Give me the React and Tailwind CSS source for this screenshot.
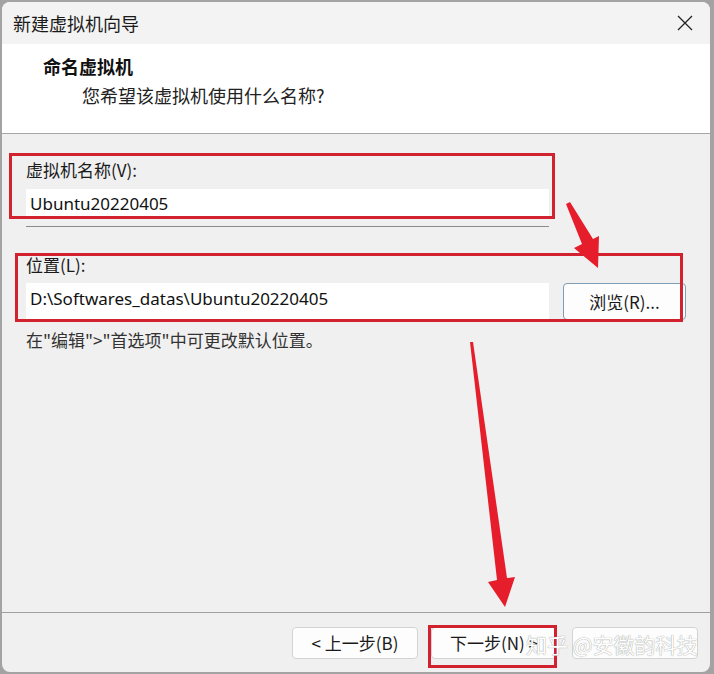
import React from "react"

const cjk = { fontFamily: '"Noto Sans CJK SC", "Noto Sans", sans-serif' }
const latin = { fontFamily: '"Noto Sans", "Noto Sans CJK SC", sans-serif' }

// red annotation arrows, drawn in window coordinates
const Arrows = () => (
  <svg className="absolute inset-0 pointer-events-none" width="708" height="670" viewBox="0 0 708 670">
    <polygon
      points="564,202 568,200 591,237 597,234 596,266 572,246 580,242"
      fill="#e61e2b"
    />
    <polygon
      points="468,340 471,340 505,576 513,575 503,605 486,580 495,578"
      fill="#e61e2b"
    />
  </svg>
)

const FooterButton = ({ children, className = "" }) => (
  <button
    className={`w-[126px] h-[32px] rounded-[4px] border border-[#d3d3d3] bg-[#fdfdfd] text-[17px] text-[#1a1a1a] flex items-center justify-center ${className}`}
    style={cjk}
  >
    {children}
  </button>
)

export default function App() {
  return (
    <div className="w-[714px] h-[674px] bg-[#a3a3a3] pt-[2px] pl-[2px]">
      <div className="relative w-[708px] h-[670px] rounded-[8px] overflow-hidden flex flex-col bg-[#f0f0f0]">
        {/* title bar */}
        <div className="h-[42px] bg-[#f3f3f3] flex items-center justify-between pl-[11px] pr-[12px]">
          <span className="text-[18px] text-[#1a1a1a] leading-none" style={cjk}>
            新建虚拟机向导
          </span>
          <svg width="18" height="18" viewBox="0 0 18 18" className="mr-[4px]">
            <path d="M2 2 L16 16 M16 2 L2 16" stroke="#222" strokeWidth="1.3" fill="none" />
          </svg>
        </div>

        {/* header */}
        <div className="h-[90px] bg-white border-b border-[#a6a6a6] pl-[41px] pt-[10px]">
          <div className="text-[18px] font-bold leading-[24px] text-[#111]" style={cjk}>
            命名虚拟机
          </div>
          <div className="ml-[39px] mt-[5px] text-[18px] leading-[24px] text-[#222]" style={cjk}>
            您希望该虚拟机使用什么名称?
          </div>
        </div>

        {/* body */}
        <div className="flex-1 px-[24px] pt-[24px]">
          <div className="text-[17px] leading-[24px] text-[#1a1a1a]" style={cjk}>
            虚拟机名称(V):
          </div>
          <div
            className="mt-[7px] w-[523px] h-[29px] bg-white flex items-center pl-[4px] text-[17px] text-[#111]"
            style={latin}
          >
            Ubuntu20220405
          </div>
          <div className="mt-[8px] w-[523px] h-px bg-[#8c8c8c]" />

          <div className="mt-[26px] text-[17px] leading-[24px] text-[#1a1a1a]" style={cjk}>
            位置(L):
          </div>
          <div className="mt-[6px] flex items-center">
            <div
              className="w-[523px] h-[37px] bg-white border-b border-[#8a8a8a] flex items-center pl-[4px] pb-[4px] text-[17px] text-[#111]"
              style={latin}
            >
              D:\Softwares_datas\Ubuntu20220405
            </div>
            <button
              className="ml-[14px] w-[123px] h-[37px] rounded-[4px] border border-[#7f9db3] bg-[#fdfdfd] text-[17px] text-[#1a1a1a] flex items-center justify-center"
              style={cjk}
            >
              浏览(R)...
            </button>
          </div>
          <div className="mt-[8px] text-[17px] leading-[24px] text-[#333]" style={cjk}>
            在"编辑"&gt;"首选项"中可更改默认位置。
          </div>
        </div>

        {/* footer */}
        <div className="h-[60px] border-t border-[#a0a0a0] flex justify-end gap-[13px] pt-[14px] pr-[12px]">
          <FooterButton>&lt; 上一步(B)</FooterButton>
          <FooterButton className="mr-[2px]">下一步(N) &gt;</FooterButton>
          <FooterButton>{""}</FooterButton>
        </div>

        {/* annotations */}
        <div className="absolute left-[7px] top-[151px] w-[546px] h-[66px] border-[3px] border-[#d3222f]" />
        <div className="absolute left-[13px] top-[251px] w-[668px] h-[69px] border-[3px] border-[#d3222f]" />
        <div className="absolute left-[426px] top-[623px] w-[129px] h-[43px] border-[3px] border-[#d3222f]" />
        <Arrows />

        {/* watermark */}
        <div
          className="absolute left-[524px] top-[627px] text-[21px] leading-[30px] text-white whitespace-nowrap [text-shadow:0_0_1px_#6f6f6f]"
          style={cjk}
        >
          知乎 @安徽韵科技
        </div>
      </div>
    </div>
  )
}
